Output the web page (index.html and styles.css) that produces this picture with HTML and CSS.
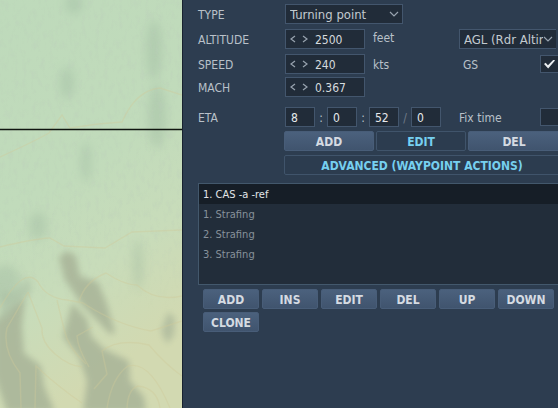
FILE: index.html
```html
<!DOCTYPE html>
<html lang="en">
<head>
  <meta charset="utf-8">
  <title>Waypoint editor</title>
  <link rel="stylesheet" href="styles.css">
</head>
<body>

<svg class="map" viewBox="0 0 182 408" preserveAspectRatio="xMinYMin slice" aria-hidden="true">
  <defs>
    <linearGradient id="land" x1="0" y1="0" x2="0.3" y2="1">
      <stop offset="0" stop-color="#bedabb"/>
      <stop offset="0.5" stop-color="#c1dbbb"/>
      <stop offset="0.75" stop-color="#c8dcba"/>
      <stop offset="1" stop-color="#d2d9b1"/>
    </linearGradient>
    <filter id="soft" x="-30%" y="-30%" width="160%" height="160%">
      <feGaussianBlur stdDeviation="3"/>
    </filter>
    <filter id="softer" x="-60%" y="-60%" width="220%" height="220%">
      <feGaussianBlur stdDeviation="5"/>
    </filter>
    <filter id="relief" x="0" y="0" width="100%" height="100%">
      <feTurbulence type="fractalNoise" baseFrequency="0.22 0.1" numOctaves="3" seed="8" result="noise"/>
      <feColorMatrix in="noise" type="matrix" values="0 0 0 0 0.5  0 0 0 0 0.6  0 0 0 0 0.5  2.4 0 0 0 -1.2"/>
    </filter>
    <linearGradient id="fade" x1="0" y1="0" x2="0" y2="1">
      <stop offset="0.7" stop-color="#fff"/>
      <stop offset="1" stop-color="#000"/>
    </linearGradient>
    <mask id="upland">
      <rect width="182" height="310" fill="url(#fade)"/>
    </mask>
  </defs>
  <rect width="182" height="408" fill="url(#land)"/>

  <!-- hill shading -->
  <g fill="#92ae97" filter="url(#softer)" opacity="0.3">
    <ellipse cx="67" cy="83" rx="7" ry="16"/>
    <ellipse cx="74" cy="4" rx="9" ry="10"/>
    <ellipse cx="154" cy="50" rx="8" ry="30"/>
    <ellipse cx="157" cy="116" rx="9" ry="32"/>
    <ellipse cx="86" cy="162" rx="5" ry="20"/>
    <ellipse cx="38" cy="226" rx="9" ry="14"/>
    <ellipse cx="138" cy="265" rx="5" ry="25"/>
    <ellipse cx="5" cy="285" rx="17" ry="20"/>
  </g>
  <g mask="url(#upland)">
    <rect width="182" height="310" filter="url(#relief)" opacity="0.3"/>
  </g>
  <g fill="#a8b498" filter="url(#soft)" opacity="0.85">
    <path d="M59 258 Q67 246 76 257 L80 276 L98 282 L107 304 L115 333 L110 334 L82 305 L65 280Z"/>
    <path d="M72 303 L87 319 L91 336 L104 349 L129 361 L130 381 L144 397 L146 412 L83 412 L87 381 L79 357 L63 337Z"/>
    <path d="M-6 323 L14 304 L25 298 L22 326 L24 353 L41 366 L44 386 L55 412 L7 412 L-6 375Z"/>
    <path d="M168 312 L175 318 L174 335 L167 344 L161 331Z" opacity="0.8"/>
  </g>
  <path d="M0 289 Q16 300 29 276 L32 290 Q20 306 0 323Z" fill="#a9bda3" filter="url(#soft)" opacity="0.55"/>

  <!-- contour lines -->
  <g fill="none" stroke="#cfca9a" stroke-width="1.4" opacity="0.38">
    <path d="M0 157 Q35 141 49 133 L62 115 L70 128 L98 124 L122 122 Q136 90 160 88 L182 95"/>
    <path d="M0 247 Q32 239 50 238 L64 246 L105 248 L132 232 L182 230"/>
    <path d="M0 308 Q24 265 38 282 Q46 298 67 300 L83 303 Q117 325 151 331 L182 321"/>
    <path d="M79 302 Q84 282 106 273 Q124 285 137 285 Q155 302 182 296"/>
    <path d="M28 292 L7 328 Q2 350 20 373 L21 408"/>
    <path d="M28 292 L42 328 Q41 342 55 354 Q69 366 82 367"/>
    <path d="M57 300 L64 329 Q68 348 86 364"/>
    <path d="M93 327 L77 336 Q78 349 89 367"/>
    <path d="M94 389 L107 374 L102 351 Q118 338 149 345 Q165 364 182 376"/>
    <path d="M107 408 Q112 377 128 366 Q150 360 170 408"/>
    <path d="M127 408 Q128 389 138 386 Q157 388 160 408"/>
    <path d="M35 408 L36 366 Q57 386 82 403"/>
  </g>
  <path d="M0 129.5H182" stroke="#101510" stroke-width="1.3"/>
</svg>

<main class="panel">
  <form class="form">
    <div class="row">
      <label for="type">TYPE</label>
      <div class="select select-type">
        <select id="type"><option>Turning point</option></select>
        <svg class="chevron" viewBox="0 0 10 6" aria-hidden="true"><path d="M1 1 L5 5 L9 1"/></svg>
      </div>
    </div>
    <div class="row">
      <label for="altitude">ALTITUDE</label>
      <div class="spinner">
        <button type="button" aria-label="Decrease altitude"><svg viewBox="0 0 6 8"><path d="M5 1 L1 4 L5 7"/></svg></button>
        <button type="button" aria-label="Increase altitude"><svg viewBox="0 0 6 8"><path d="M1 1 L5 4 L1 7"/></svg></button>
        <input id="altitude" type="text" value="2500">
      </div>
      <span class="unit">feet</span>
      <div class="select select-ref">
        <select aria-label="Altitude reference"><option>AGL (Rdr Altimeter)</option></select>
        <svg class="chevron" viewBox="0 0 10 6" aria-hidden="true"><path d="M1 1 L5 5 L9 1"/></svg>
      </div>
    </div>
    <div class="row row-speed">
      <label for="speed">SPEED</label>
      <div class="spinner">
        <button type="button" aria-label="Decrease speed"><svg viewBox="0 0 6 8"><path d="M5 1 L1 4 L5 7"/></svg></button>
        <button type="button" aria-label="Increase speed"><svg viewBox="0 0 6 8"><path d="M1 1 L5 4 L1 7"/></svg></button>
        <input id="speed" type="text" value="240">
      </div>
      <span class="unit">kts</span>
      <div class="check">
        <label for="gs" class="gs">GS</label>
        <input id="gs" type="checkbox" checked>
      </div>
    </div>
    <div class="row row-mach">
      <label for="mach">MACH</label>
      <div class="spinner">
        <button type="button" aria-label="Decrease mach"><svg viewBox="0 0 6 8"><path d="M5 1 L1 4 L5 7"/></svg></button>
        <button type="button" aria-label="Increase mach"><svg viewBox="0 0 6 8"><path d="M1 1 L5 4 L1 7"/></svg></button>
        <input id="mach" type="text" value="0.367">
      </div>
    </div>
    <div class="row row-eta">
      <label for="eta-h">ETA</label>
      <div class="eta">
        <input id="eta-h" type="text" value="8">
        <span>:</span>
        <input type="text" value="0" aria-label="ETA minutes">
        <span>:</span>
        <input type="text" value="52" aria-label="ETA seconds">
        <span class="slash">/</span>
        <input type="text" value="0" aria-label="ETA day">
      </div>
      <div class="check">
        <label for="fix">Fix time</label>
        <input id="fix" type="checkbox">
      </div>
    </div>
  </form>

  <div class="modes">
    <button type="button" class="btn">ADD</button>
    <button type="button" class="btn btn-on">EDIT</button>
    <button type="button" class="btn">DEL</button>
    <button type="button" class="btn btn-on btn-wide">ADVANCED (WAYPOINT ACTIONS)</button>
  </div>

  <ul class="tasks">
    <li class="selected">1. CAS -a -ref</li>
    <li>1. Strafing</li>
    <li>2. Strafing</li>
    <li>3. Strafing</li>
  </ul>

  <div class="actions">
    <button type="button" class="btn">ADD</button>
    <button type="button" class="btn">INS</button>
    <button type="button" class="btn">EDIT</button>
    <button type="button" class="btn">DEL</button>
    <button type="button" class="btn">UP</button>
    <button type="button" class="btn">DOWN</button>
    <button type="button" class="btn">CLONE</button>
  </div>
</main>

</body>
</html>
```
FILE: styles.css
```css
* {
  box-sizing: border-box;
}
body {
  margin: 0;
  display: flex;
  min-height: 100vh;
  overflow: hidden;
  background-color: #2d3d50;
  color: #b9c1c9;
  font-family: "DejaVu Sans Condensed", "DejaVu Sans", sans-serif;
  font-stretch: condensed;
  font-size: 12px;
  line-height: 20px;
}
button, input, select {
  margin: 0;
  font: inherit;
  color: inherit;
}
.map {
  flex: 0 0 182px;
  height: 100vh;
}
.panel {
  flex: 1;
  min-width: 0;
  padding: 4px 0 0 15px;
  border-left: 1px solid #18222f;
  overflow: hidden;
}

/* form */
.row {
  display: grid;
  grid-template-columns: 87px 88px 86px 1fr;
  height: 20px;
  margin-bottom: 5px;
}
.row > label {
  line-height: 22px;
}
.row-speed {
  margin-bottom: 3px;
}
.row-mach {
  margin-bottom: 10px;
}
.row-eta {
  grid-template-columns: 87px 174px 1fr;
  margin-bottom: 4px;
}
.select, .spinner, .eta input, .check input {
  border: 1px solid #43566d;
  background-color: #212c39;
  height: 20px;
}
.select {
  position: relative;
}
.select select {
  display: block;
  width: 100%;
  height: 18px;
  padding: 1px 13px 0 4px;
  border: 0;
  background: none;
  appearance: none;
  color: #c3cad0;
  font-size: 13px;
  line-height: 18px;
}
.select-type {
  width: 118px;
}
.select-ref {
  margin-right: 2px;
  border-right: 0;
}
.chevron {
  position: absolute;
  top: 6px;
  right: 3px;
  width: 10px;
  height: 6px;
}
.chevron path, .spinner path {
  fill: none;
  stroke: #98a3af;
  stroke-width: 1.2;
}
.spinner {
  display: flex;
  align-items: center;
  width: 80px;
  padding-left: 4px;
}
.spinner button {
  display: flex;
  width: 12px;
  padding: 0;
  border: 0;
  background: none;
}
.spinner svg {
  width: 6px;
  height: 8px;
}
.spinner input {
  width: 50px;
  height: 18px;
  padding: 1px 0 0;
  border: 0;
  background: none;
  color: #d5dade;
  text-indent: 1px;
}
.unit {
  line-height: 18px;
}
.row-speed > label, .row-speed .unit, .row-speed .gs {
  line-height: 22px;
}
.eta {
  display: flex;
}
.eta input {
  width: 30px;
  padding: 1px 5px 0;
  color: #e6e9ec;
}
.eta span {
  width: 12px;
  line-height: 22px;
  text-align: center;
}
.eta .slash {
  color: #6f7b88;
}
.check {
  display: flex;
  line-height: 22px;
}
.check label {
  width: 81px;
}
.check .gs {
  padding-left: 4px;
}
.check input {
  flex: none;
  width: 19px;
  height: 18px;
  margin-top: 1px;
  appearance: none;
}
.check input:checked {
  display: grid;
  place-items: center;
}
.check input:checked::before {
  content: "";
  width: 11px;
  height: 9px;
  background-color: #e8ecef;
  clip-path: polygon(0 50%, 15% 36%, 36% 65%, 88% 0, 100% 12%, 38% 100%);
}

/* buttons */
.btn {
  height: 20px;
  padding: 1px 0 0;
  border: 1px solid #485d78;
  border-radius: 2px;
  background: linear-gradient(#4b617d, #40546e);
  color: #d5dbe2;
  font-weight: bold;
  line-height: 18px;
  white-space: nowrap;
}
.btn-on {
  border-color: #40546b;
  background: #2c3c4f;
  color: #76d0f0;
}
.modes {
  display: grid;
  grid-template-columns: 90px 90px 1fr;
  gap: 4px 2px;
  margin: 0 -2px 0 86px;
}
.btn-wide {
  grid-column: 1 / -1;
}

/* task list */
.tasks {
  height: 102px;
  margin: 8px 0 4px;
  padding: 0;
  border: 1px solid #43586c;
  border-right: 0;
  background-color: #222d3a;
  color: #87919b;
  font-size: 11px;
  list-style: none;
}
.tasks li {
  height: 20px;
  padding-left: 4px;
  line-height: 22px;
}
.tasks .selected {
  background-color: #161e27;
  color: #e2e6e9;
}
.actions {
  display: flex;
  flex-wrap: wrap;
  gap: 3px;
  padding-left: 5px;
}
.actions .btn {
  width: 56px;
}
```
